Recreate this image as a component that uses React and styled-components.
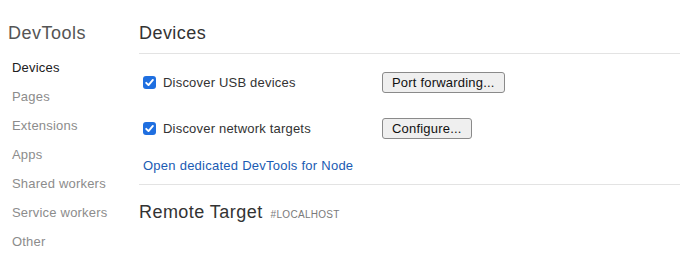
import React from "react";
import styled, { createGlobalStyle } from "styled-components";

const GlobalStyle = createGlobalStyle`
  html, body {
    margin: 0;
    padding: 0;
    background: #ffffff;
    font-family: "Liberation Sans", Arial, sans-serif;
  }
`;

const sideItems = [
  { id: 1, title: "Devices", active: true },
  { id: 2, title: "Pages" },
  { id: 3, title: "Extensions" },
  { id: 4, title: "Apps" },
  { id: 5, title: "Shared workers" },
  { id: 6, title: "Service workers" },
  { id: 7, title: "Other" },
];

function Check() {
  return (
    <CheckBox>
      <svg width="13" height="13" viewBox="0 0 13 13">
        <path
          d="M3.2 6.8 L5.5 9.1 L9.9 3.9"
          fill="none"
          stroke="#ffffff"
          strokeWidth="1.9"
          strokeLinecap="round"
          strokeLinejoin="round"
        />
      </svg>
    </CheckBox>
  );
}

function App() {
  return (
    <Page>
      <GlobalStyle />
      <Sidebar>
        <Brand>DevTools</Brand>
        <Menu>
          {sideItems.map((item) => (
            <MenuItem key={item.id} $active={item.active}>
              {item.title}
            </MenuItem>
          ))}
        </Menu>
      </Sidebar>
      <Main>
        <Header>
          <Title>Devices</Title>
        </Header>
        <Section>
          <Row>
            <Label>
              <Check />
              Discover USB devices
            </Label>
            <Button>Port forwarding...</Button>
          </Row>
          <Row>
            <Label>
              <Check />
              Discover network targets
            </Label>
            <Button>Configure...</Button>
          </Row>
          <Link>Open dedicated DevTools for Node</Link>
        </Section>
        <Target>
          <Title>Remote Target</Title>
          <Host>#LOCALHOST</Host>
        </Target>
      </Main>
    </Page>
  );
}

const Page = styled.div`
  display: flex;
  width: 680px;
  height: 277px;
  overflow: hidden;
`;

const Sidebar = styled.div`
  width: 139px;
  flex-shrink: 0;
  padding-left: 8px;
  box-sizing: border-box;
`;

const Brand = styled.div`
  font-size: 18px;
  color: #555555;
  height: 24px;
  line-height: 24px;
  margin-top: 21px;
  letter-spacing: 0.5px;
`;

const Menu = styled.ul`
  list-style: none;
  margin: 15px 0 0 0;
  padding: 0 0 0 4px;
  display: flex;
  flex-direction: column;
  gap: 13px;
`;

const MenuItem = styled.li`
  font-size: 13px;
  line-height: 16px;
  height: 16px;
  letter-spacing: 0.2px;
  color: ${(p) => (p.$active ? "#202020" : "#8c8c8c")};
`;

const Main = styled.div`
  flex: 1;
  display: flex;
  flex-direction: column;
`;

const Header = styled.div`
  border-bottom: 1px solid #e3e3e3;
  display: flex;
  align-items: center;
  padding-top: 12px;
  box-sizing: border-box;
  height: 54px;
`;

const Title = styled.h2`
  margin: 0;
  font-size: 18px;
  font-weight: normal;
  color: #333333;
  line-height: 24px;
  letter-spacing: 0.45px;
`;

const Section = styled.div`
  display: flex;
  flex-direction: column;
  padding: 17px 0 0 4px;
  border-bottom: 1px solid #e3e3e3;
  height: 131px;
  box-sizing: border-box;
`;

const Row = styled.div`
  display: flex;
  align-items: center;
  height: 22px;
  margin-bottom: 24px;
`;

const Label = styled.label`
  width: 239px;
  display: flex;
  align-items: center;
  gap: 7px;
  font-size: 13px;
  letter-spacing: 0.2px;
  color: #333333;
`;

const CheckBox = styled.span`
  width: 13px;
  height: 13px;
  border-radius: 3px;
  background: #1f6fe0;
  display: inline-flex;
  flex-shrink: 0;
`;

const Button = styled.button`
  height: 21px;
  padding: 0 9px;
  font-family: "Liberation Sans", Arial, sans-serif;
  font-size: 13px;
  letter-spacing: 0.2px;
  color: #111111;
  background: #efefef;
  border: 1px solid #8a8a8a;
  border-radius: 3px;
  line-height: 19px;
`;

const Link = styled.a`
  font-size: 13px;
  color: #1a5bb3;
  line-height: 16px;
  letter-spacing: 0.25px;
  margin-top: -5px;
  cursor: pointer;
`;

const Target = styled.div`
  display: flex;
  align-items: baseline;
  gap: 8px;
  padding-top: 15px;
`;

const Host = styled.span`
  font-size: 10px;
  color: #7a7a7a;
  letter-spacing: 0.3px;
`;

export default App;
